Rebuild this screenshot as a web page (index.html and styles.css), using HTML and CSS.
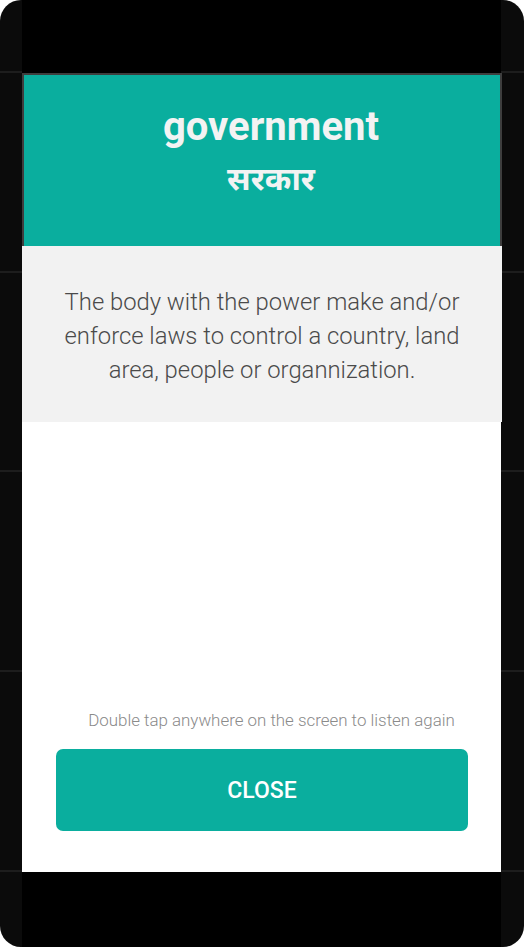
FILE: index.html
```html
<!DOCTYPE html>
<html lang="en">
<head>
<meta charset="utf-8">
<title>government</title>
<link rel="stylesheet" href="styles.css">
</head>
<body>
<div class="frame">
  <div class="column">
    <div class="dialog">
      <header class="header">
        <h1 class="word">government</h1>
        <p class="translation" lang="ne">सरकार</p>
      </header>
      <section class="definition">
        <p>The body with the power make and/or enforce laws to control a country, land area, people or organnization.</p>
      </section>
      <section class="actions">
        <p class="hint">Double tap anywhere on the screen to listen again</p>
        <button class="close" type="button">CLOSE</button>
      </section>
    </div>
  </div>
</div>
</body>
</html>
```

FILE: styles.css
```css
html, body {
  margin: 0;
  padding: 0;
  background: #ffffff;
}

.frame {
  width: 524px;
  height: 947px;
  border-radius: 21px;
  overflow: hidden;
  background-color: #0b0b0b;
  background-image: repeating-linear-gradient(
    to bottom,
    transparent 0px,
    transparent 71px,
    #1d1d1d 71px,
    #1d1d1d 73px,
    transparent 73px,
    transparent 199.75px
  );
  padding-left: 22px;
  box-sizing: border-box;
  font-family: Roboto, "Noto Sans", sans-serif;
}

.column {
  width: 479px;
  height: 947px;
  background: #000000;
  padding-top: 73px;
  box-sizing: border-box;
}

.dialog {
  display: flex;
  flex-direction: column;
  width: 480px;
}

.header {
  height: 173px;
  box-sizing: border-box;
  background: #0aae9e;
  border: 2px solid #3e3e3e;
  border-bottom: none;
  display: flex;
  flex-direction: column;
  align-items: center;
  color: #f3f3f3;
  padding-top: 28px;
}

.word {
  margin: 0;
  font-size: 40px;
  font-weight: 700;
  line-height: 48px;
  padding-left: 18px;
}

.translation {
  margin: 7px 0 0;
  font-size: 32px;
  font-weight: 700;
  line-height: 40px;
  padding-left: 18px;
  font-family: "Noto Sans", Roboto, sans-serif;
}

.definition {
  height: 176px;
  box-sizing: border-box;
  background: #f2f2f2;
  padding: 39px 20px 0;
  text-align: center;
}

.definition p {
  margin: 0;
  font-size: 23.8px;
  font-weight: 300;
  line-height: 34px;
  color: #4a4a4a;
}

.actions {
  width: 479px;
  height: 450px;
  box-sizing: border-box;
  background: #ffffff;
  display: flex;
  flex-direction: column;
  justify-content: flex-end;
  padding: 0 33px 41px 34px;
}

.hint {
  margin: 0 0 19px;
  padding-left: 19px;
  text-align: center;
  font-size: 16.9px;
  font-weight: 300;
  line-height: 20px;
  color: #8a8a8a;
  white-space: nowrap;
}

.close {
  height: 82px;
  border: none;
  border-radius: 7px;
  background: #0aae9e;
  color: #ffffff;
  font-family: Roboto, sans-serif;
  font-size: 23px;
  font-weight: 500;
  padding: 0;
}
```
